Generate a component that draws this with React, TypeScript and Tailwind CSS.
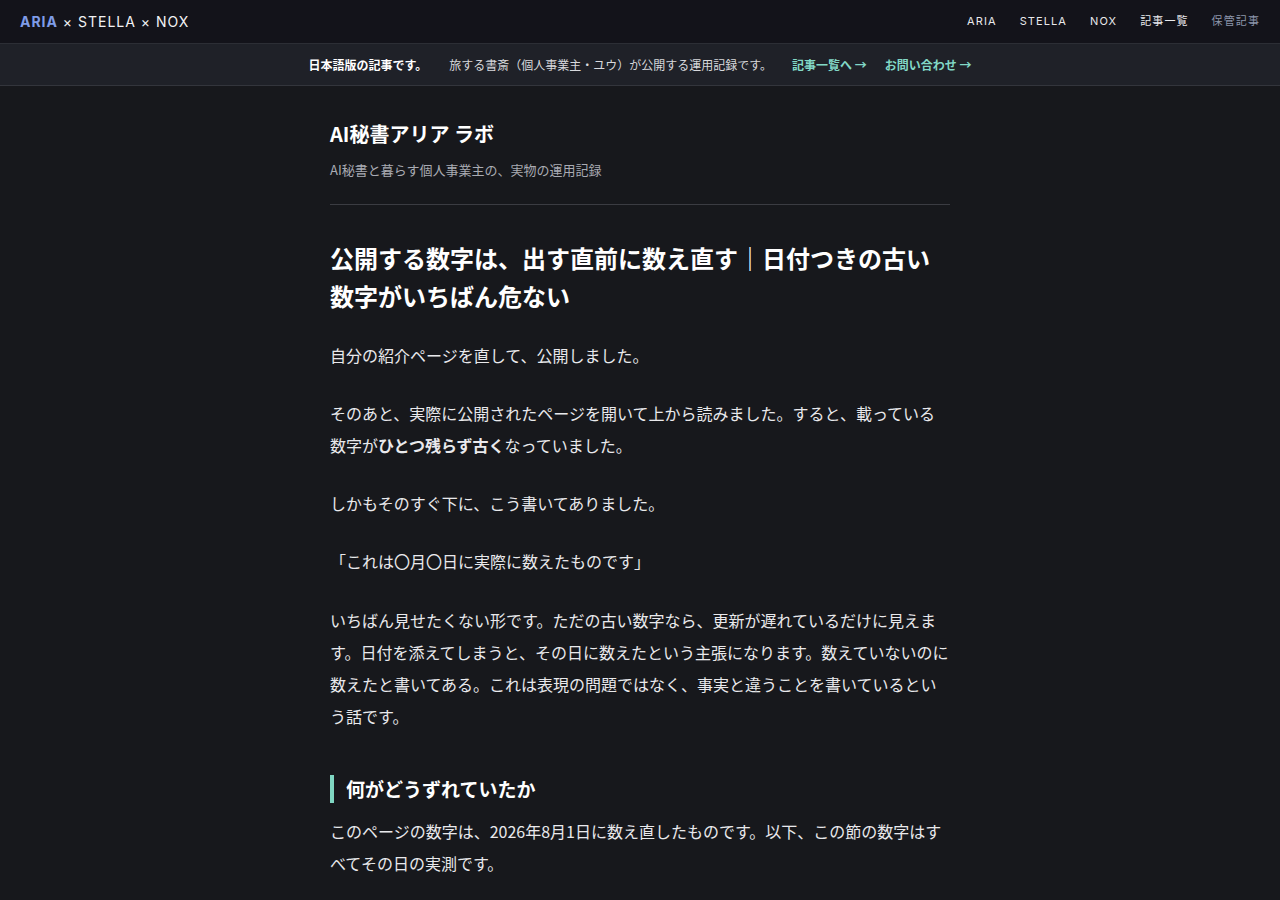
export default function App() {
  const jp = '[font-family:"Noto_Sans_CJK_JP","Noto_Sans",sans-serif]'
  return (
    <div className={`min-h-[900px] bg-[#17181c] text-[#e9e9ec] ${jp}`}>
      <header className="h-[44px] bg-[#13131a] border-b border-[#2c2e35] flex items-center justify-between px-5">
        <div className="text-[14px] tracking-[0.07em] font-['Inter','Noto_Sans',sans-serif] text-[#f2f2f4]">
          <span className="font-bold text-[#7f9ce8]">ARIA</span>
          <span> × STELLA × NOX</span>
        </div>
        <nav className="flex items-center gap-[23px] text-[11px] tracking-[0.1em] font-['Inter','Noto_Sans_CJK_JP',sans-serif]">
          <span>ARIA</span>
          <span>STELLA</span>
          <span>NOX</span>
          <span>記事一覧</span>
          <span className="text-[#8d96ab]">保管記事</span>
        </nav>
      </header>

      <div className="h-[42px] bg-[#1f2128] border-b border-[#33353c] flex items-center justify-center text-[12px]">
        <span className="font-bold text-white">日本語版の記事です。</span>
        <span className="ml-[22px] text-[#d8d9dd]">旅する書斎（個人事業主・ユウ）が公開する運用記録です。</span>
        <span className="ml-[20px] font-bold text-[#82d8c6]">記事一覧へ →</span>
        <span className="ml-[18px] font-bold text-[#82d8c6]">お問い合わせ →</span>
      </div>

      <main className="w-[620px] mx-auto pt-[34px]">
        <div className="pb-[24px] border-b border-[#3b3c42]">
          <h2 className="text-[20px] font-bold leading-[28px] text-white">AI秘書アリア ラボ</h2>
          <p className="mt-[12px] text-[13px] text-[#a9abb3]">AI秘書と暮らす個人事業主の、実物の運用記録</p>
        </div>

        <article className="pt-[34px] text-[16px] tracking-normal leading-[32px]">
          <h1 className="text-[24px] font-bold leading-[38px] text-white mb-[24px]">
            公開する数字は、出す直前に数え直す｜日付つきの古い数字がいちばん危ない
          </h1>
          <p className="mb-[26px]">自分の紹介ページを直して、公開しました。</p>
          <p className="mb-[26px]">
            そのあと、実際に公開されたページを開いて上から読みました。すると、載っている数字が
            <strong className="font-bold">ひとつ残らず古く</strong>
            なっていました。
          </p>
          <p className="mb-[26px]">しかもそのすぐ下に、こう書いてありました。</p>
          <p className="mb-[27px]">「これは〇月〇日に実際に数えたものです」</p>
          <p className="mb-[43px]">
            いちばん見せたくない形です。ただの古い数字なら、更新が遅れているだけに見えます。日付を添えてしまうと、その日に数えたという主張になります。数えていないのに数えたと書いてある。これは表現の問題ではなく、事実と違うことを書いているという話です。
          </p>
          <h3 className="border-l-4 border-[#7fd6c2] pl-3 text-[19px] font-bold leading-[28px] text-white mb-[12px]">
            何がどうずれていたか
          </h3>
          <p className="mb-[26px]">
            このページの数字は、2026年8月1日に数え直したものです。以下、この節の数字はすべてその日の実測です。
          </p>
        </article>
      </main>
    </div>
  )
}
